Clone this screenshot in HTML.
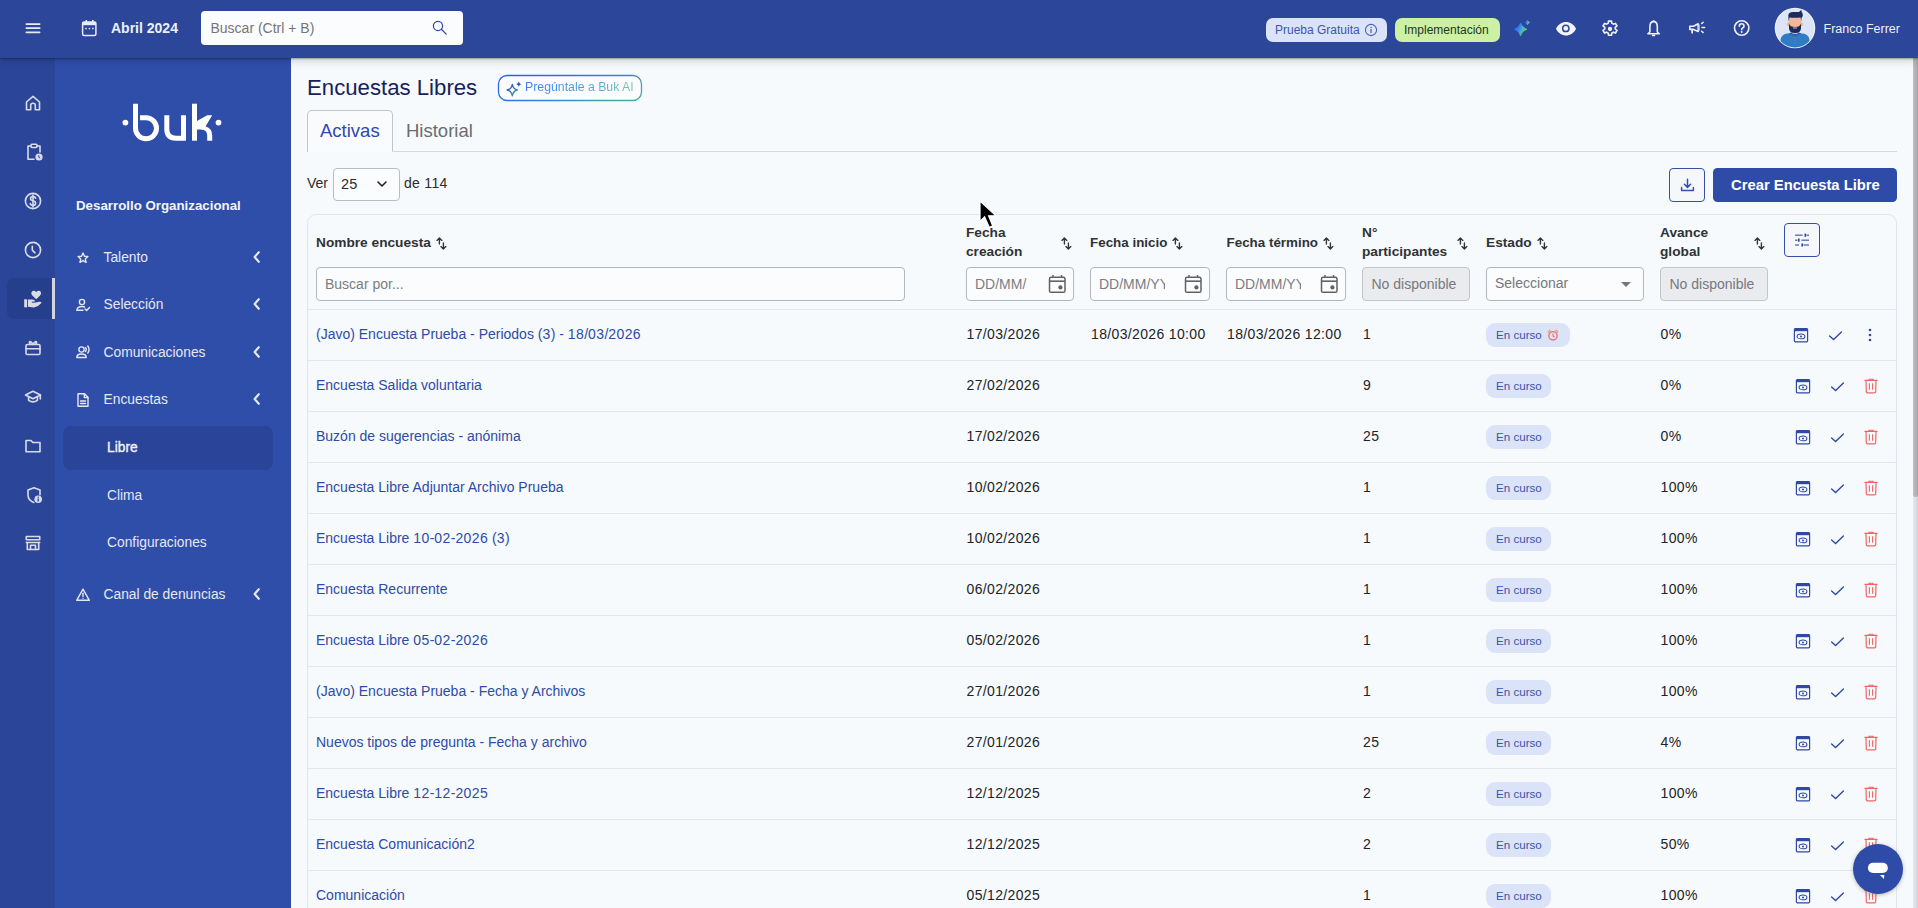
<!DOCTYPE html>
<html><head><meta charset="utf-8">
<style>
*{box-sizing:border-box;margin:0;padding:0}
html,body{width:1918px;height:908px;overflow:hidden;background:#f6fafc;font-family:"Liberation Sans",sans-serif;}
.abs{position:absolute}
#top{position:absolute;left:0;top:0;width:1918px;height:58px;background:#2c4699;z-index:5;box-shadow:0 1px 1.5px rgba(0,0,0,.3),0 3px 8px rgba(0,0,0,.16)}
#rail{position:absolute;left:0;top:58px;width:55px;height:850px;background:#2b4699}
#side{position:absolute;left:55px;top:58px;width:236px;height:850px;background:#2f4eaa}
#main{position:absolute;left:291px;top:58px;width:1627px;height:850px;background:#f6fafc}
#sb{position:absolute;left:1913px;top:58px;width:5px;height:850px;background:linear-gradient(90deg,#e6e8f1,#d2d4dc)}
#sbt{position:absolute;left:1913px;top:58px;width:5px;height:439px;border-radius:0 0 3px 3px;background:linear-gradient(90deg,#bfbfc2,#a8a8aa)}
.t{position:absolute;white-space:nowrap;line-height:1}
.w{color:#fff}
</style></head><body>
<div id="top">
 <svg class="abs" style="left:25px;top:22px" width="16" height="12" viewBox="0 0 16 12"><rect x="0.5" y="1.2" width="15" height="1.8" rx=".9" fill="#e8ebf5"/><rect x="0.5" y="5.3" width="15" height="1.8" rx=".9" fill="#e8ebf5"/><rect x="0.5" y="9.4" width="15" height="1.8" rx=".9" fill="#e8ebf5"/></svg>
 <svg class="abs" style="left:81px;top:19px" width="17" height="18" viewBox="0 0 17 18"><rect x="1.6" y="3" width="13.3" height="13.6" rx="1.5" fill="none" stroke="#e8ebf5" stroke-width="1.5"/><rect x="1.6" y="3" width="13.3" height="3.2" fill="#e8ebf5"/><rect x="4.5" y="1" width="1.6" height="3" fill="#e8ebf5"/><rect x="11" y="1" width="1.6" height="3" fill="#e8ebf5"/><rect x="4.3" y="8.8" width="1.5" height="1.5" fill="#e8ebf5"/><rect x="7.7" y="8.8" width="1.5" height="1.5" fill="#e8ebf5"/><rect x="11.1" y="8.8" width="1.5" height="1.5" fill="#e8ebf5"/></svg>
 <div class="t" style="left:111px;top:21.2px;font-size:14px;font-weight:bold;color:#eef0f7">Abril 2024</div>
 <div class="abs" style="left:201px;top:11px;width:262px;height:34px;background:#fbfcfd;border-radius:4px"></div>
 <div class="t" style="left:210.5px;top:21.3px;font-size:14px;color:#757575">Buscar (Ctrl + B)</div>
 <svg class="abs" style="left:432px;top:20px" width="16" height="16" viewBox="0 0 16 16"><circle cx="6" cy="5.9" r="4.6" fill="none" stroke="#2e45ab" stroke-width="1.25"/><line x1="9.4" y1="9.3" x2="14.2" y2="14.1" stroke="#2e45ab" stroke-width="1.3" stroke-linecap="round"/></svg>
 <div class="abs" style="left:1266px;top:18px;width:121px;height:24px;background:#dbe3f8;border-radius:7px"></div>
 <div class="t" style="left:1275px;top:24px;font-size:12px;color:#3d56a6">Prueba Gratuita</div>
 <svg class="abs" style="left:1364px;top:23px" width="14" height="14" viewBox="0 0 14 14"><circle cx="7" cy="7" r="5.6" fill="none" stroke="#4d63ad" stroke-width="1.1"/><rect x="6.4" y="6" width="1.2" height="4" fill="#4d63ad"/><circle cx="7" cy="4.4" r=".75" fill="#4d63ad"/></svg>
 <div class="abs" style="left:1395px;top:18px;width:105px;height:24px;background:#cdf0a2;border-radius:7px"></div>
 <div class="t" style="left:1404px;top:24px;font-size:12px;color:#22361f">Implementación</div>
 <svg class="abs" style="left:1512px;top:19px" width="20" height="19" viewBox="0 0 20 19"><defs><linearGradient id="sg" x1="0.1" y1="0.3" x2="0.9" y2="0.6"><stop offset="0" stop-color="#2c66f4"/><stop offset=".55" stop-color="#3a9ce6"/><stop offset=".62" stop-color="#4fb5a6"/><stop offset="1" stop-color="#56bf9e"/></linearGradient></defs><path d="M8.5 4.5 Q9.9 9 14.5 10.3 Q9.9 11.6 8.5 16.3 Q7.1 11.6 2.6 10.3 Q7.1 9 8.5 4.5Z" fill="url(#sg)" stroke="url(#sg)" stroke-width="1.3" stroke-linejoin="round"/><path d="M15.4 1.3 Q16.1 2.8 17.6 3.5 Q16.1 4.2 15.4 5.7 Q14.7 4.2 13.2 3.5 Q14.7 2.8 15.4 1.3Z" fill="url(#sg)" stroke="url(#sg)" stroke-width=".9" stroke-linejoin="round"/></svg>
 <svg class="abs" style="left:1555px;top:21px" width="22" height="16" viewBox="0 0 22 16"><path d="M1 7.8 C5 -1.2 17 -1.2 21 7.8 C17 16.8 5 16.8 1 7.8Z" fill="#f4f5fa"/><circle cx="10.8" cy="7.4" r="3.9" fill="#2c4699"/><circle cx="10.8" cy="7.4" r="2.4" fill="#f4f5fa"/></svg>
 <svg class="abs" style="left:1600px;top:18.6px" width="20" height="20" viewBox="0 0 24 24"><path fill="none" stroke="#eef0f7" stroke-width="2" d="M10.3 2.5h3.4l.5 2.6c.7.25 1.3.6 1.9 1.1l2.5-.9 1.7 2.9-2 1.8c.1.7.1 1.3 0 2l2 1.8-1.7 2.9-2.5-.9c-.6.5-1.2.85-1.9 1.1l-.5 2.6h-3.4l-.5-2.6c-.7-.25-1.3-.6-1.9-1.1l-2.5.9-1.7-2.9 2-1.8c-.1-.7-.1-1.3 0-2l-2-1.8 1.7-2.9 2.5.9c.6-.5 1.2-.85 1.9-1.1z"/><circle cx="12" cy="12" r="2.6" fill="#eef0f7"/></svg>
 <svg class="abs" style="left:1645px;top:19px" width="17" height="19" viewBox="0 0 17 19"><path d="M8.6 2.6 C5.8 2.6 4.9 4.8 4.9 7.6 L4.9 13 L2.9 14.8 L14.3 14.8 L12.3 13 L12.3 7.6 C12.3 4.8 11.4 2.6 8.6 2.6Z" fill="none" stroke="#eef0f7" stroke-width="1.6" stroke-linejoin="round"/><rect x="7.5" y="1.2" width="2.2" height="1.8" rx=".9" fill="#eef0f7"/><rect x="6.9" y="15.6" width="3.4" height="1.7" rx=".85" fill="#eef0f7"/></svg>
 <svg class="abs" style="left:1688px;top:21px" width="19" height="14" viewBox="0 0 19 14"><path d="M1.8 5.2 L5.5 5.2 L10.2 2.8 L10.2 10.4 L5.5 8.4 L1.8 8.4Z" fill="none" stroke="#eef0f7" stroke-width="1.6" stroke-linejoin="round"/><rect x="3.3" y="8" width="1.7" height="4.5" fill="#eef0f7"/><rect x="10.2" y="3.4" width="1.5" height="6.4" fill="#c8d0ea"/><line x1="13.6" y1="2.6" x2="15.2" y2="1.2" stroke="#eef0f7" stroke-width="1.4" stroke-linecap="round"/><line x1="14" y1="6.5" x2="16.6" y2="6.5" stroke="#eef0f7" stroke-width="1.5" stroke-linecap="round"/><line x1="13.6" y1="10.2" x2="15.2" y2="11.6" stroke="#eef0f7" stroke-width="1.4" stroke-linecap="round"/></svg>
 <svg class="abs" style="left:1732px;top:19px" width="19" height="19" viewBox="0 0 19 19"><circle cx="9.7" cy="9" r="7.2" fill="none" stroke="#eef0f7" stroke-width="1.6"/><path d="M7.3 7.2 Q7.3 4.8 9.7 4.8 Q12 4.8 12 6.9 Q12 8.3 10.6 9 Q9.7 9.5 9.7 10.8" fill="none" stroke="#eef0f7" stroke-width="1.6" stroke-linecap="round"/><circle cx="9.7" cy="13" r="1" fill="#eef0f7"/></svg>
 <svg class="abs" style="left:1774px;top:7px" width="42" height="42" viewBox="0 0 42 42"><defs><clipPath id="avc"><circle cx="21" cy="21" r="19.5"/></clipPath></defs><circle cx="21" cy="21" r="20.3" fill="#eef1f8"/><circle cx="21" cy="21" r="19.2" fill="#dce4f7"/><g clip-path="url(#avc)"><path d="M6.5 42 L6.5 33 Q7 27.5 13 26.5 L29 26.5 Q35 27.5 35.5 33 L35.5 42Z" fill="#2e7cc4"/><path d="M14.5 26.5 L21 29.5 L27.5 26.5 L25 25.5 L17 25.5Z" fill="#2766a8"/><circle cx="21" cy="31" r=".5" fill="#6a8fd0"/><circle cx="21" cy="33.5" r=".5" fill="#6a8fd0"/><circle cx="21" cy="36" r=".5" fill="#6a8fd0"/><rect x="18.5" y="23" width="5" height="4" fill="#eaa98a"/><rect x="13.3" y="15.5" width="2.4" height="3.6" rx="1.2" fill="#f0a96b"/><rect x="26.3" y="15.5" width="2.4" height="3.6" rx="1.2" fill="#f0a96b"/><rect x="15" y="10" width="12" height="10" rx="2" fill="#f3b89a"/><path d="M15 16.5 L15 21.5 Q15.5 26 21 26 Q26.5 26 27 21.5 L27 16.5 Q26 20 21 20 Q16 20 15 16.5Z" fill="#1c2a5c"/><rect x="19" y="20.5" width="4" height="1" fill="#f3b89a"/><path d="M14.6 14.5 L14.3 8 Q15 5 19 5 L25 5 Q26.5 3.5 27.5 2.5 Q27 5 28.5 6 Q29.5 8.5 27.5 11 L27.4 14.5 L26.5 10.5 Q21 11 15.5 10.5Z" fill="#1c2a5c"/></g></svg>
 <div class="t" style="left:1823.5px;top:22.8px;font-size:12.5px;color:#eef0f7">Franco Ferrer</div>
</div>
<div id="rail">
<div class="abs" style="left:7px;top:220px;width:45px;height:41px;background:#263f8d;border-radius:7px 0 0 7px"></div>
<div class="abs" style="left:52px;top:220px;width:3px;height:41px;background:#d4d5da"></div>
<svg class="abs" style="left:24.0px;top:36.0px" width="18" height="18" viewBox="0 0 18 18"><path d="M2.5 8 L9 2.3 L15.5 8 L15.5 15.7 L11.3 15.7 L11.3 11 Q11.3 9.2 9 9.2 Q6.7 9.2 6.7 11 L6.7 15.7 L2.5 15.7Z" fill="none" stroke="#d9dce8" stroke-width="1.6" stroke-linejoin="round" stroke-linecap="round"/></svg>
<svg class="abs" style="left:24.5px;top:85.0px" width="18" height="18" viewBox="0 0 18 18"><path d="M6 3 L3 3 L3 16.3 L9 16.3" fill="none" stroke="#d9dce8" stroke-width="1.6" stroke-linejoin="round" stroke-linecap="round"/><path d="M12 3 L15 3 L15 9" fill="none" stroke="#d9dce8" stroke-width="1.6" stroke-linejoin="round" stroke-linecap="round"/><rect x="6" y="1.3" width="6" height="3.2" rx="1" fill="none" stroke="#d9dce8" stroke-width="1.6" stroke-linejoin="round" stroke-linecap="round"/><circle cx="14" cy="14" r="3.6" fill="#d9dce8"/><path d="M13.8 12.3 L13.8 14.2 L15.2 15.2" stroke="#2b4699" stroke-width="1" fill="none"/></svg>
<svg class="abs" style="left:24.0px;top:134.0px" width="18" height="18" viewBox="0 0 18 18"><circle cx="9" cy="9" r="7.6" fill="none" stroke="#d9dce8" stroke-width="1.6" stroke-linejoin="round" stroke-linecap="round"/><path d="M11.6 6.3 Q11.2 4.6 9 4.6 Q6.5 4.6 6.5 6.6 Q6.5 8.3 9 8.8 Q11.6 9.3 11.6 11.2 Q11.6 13.3 9 13.3 Q6.6 13.3 6.3 11.6" fill="none" stroke="#d9dce8" stroke-width="1.6" stroke-linejoin="round" stroke-linecap="round"/><line x1="9" y1="3" x2="9" y2="15" fill="none" stroke="#d9dce8" stroke-width="1.6" stroke-linejoin="round" stroke-linecap="round"/></svg>
<svg class="abs" style="left:24.0px;top:183.0px" width="18" height="18" viewBox="0 0 18 18"><circle cx="9" cy="9" r="7.6" fill="none" stroke="#d9dce8" stroke-width="1.6" stroke-linejoin="round" stroke-linecap="round"/><path d="M8.3 5.2 L8.3 9.2 L11 11.8" fill="none" stroke="#d9dce8" stroke-width="1.6" stroke-linejoin="round" stroke-linecap="round"/></svg>
<svg class="abs" style="left:24px;top:232px" width="19" height="19" viewBox="0 0 19 19"><path d="M12.2 9.2 L8.3 5.4 Q6.6 3.6 7.6 1.9 Q8.6 0.5 10.3 0.8 Q11.4 1 12.2 2 Q13 1 14.1 0.8 Q15.8 0.5 16.8 1.9 Q17.8 3.6 16.1 5.4Z" fill="#d9dce8"/><rect x="0.2" y="9.3" width="2.9" height="8" fill="#d9dce8"/><path d="M4 9.6 L8.6 9.6 Q10.9 9.9 11 11.4 L7.6 11.8 L8 12.8 L11.6 12.6 L15 11.8 Q17.8 11.6 17.4 13 Q13.8 17 10 17.6 L4 16.8Z" fill="#d9dce8"/></svg>
<svg class="abs" style="left:24.0px;top:281.0px" width="18" height="18" viewBox="0 0 18 18"><rect x="2" y="5.5" width="14" height="10" rx="1.3" fill="none" stroke="#d9dce8" stroke-width="1.6" stroke-linejoin="round" stroke-linecap="round"/><line x1="2" y1="9.8" x2="16" y2="9.8" fill="none" stroke="#d9dce8" stroke-width="1.6" stroke-linejoin="round" stroke-linecap="round"/><path d="M9 5.5 Q7 2 5.6 2.8 Q4.8 3.6 6.5 5.3 M9 5.5 Q11 2 12.4 2.8 Q13.2 3.6 11.5 5.3" fill="none" stroke="#d9dce8" stroke-width="1.6" stroke-linejoin="round" stroke-linecap="round"/></svg>
<svg class="abs" style="left:24.0px;top:330.0px" width="18" height="18" viewBox="0 0 18 18"><path d="M1.5 7 L9 3.2 L16.5 7 L9 10.8Z" fill="none" stroke="#d9dce8" stroke-width="1.6" stroke-linejoin="round" stroke-linecap="round"/><path d="M4.6 8.8 L4.6 12.3 Q9 15.5 13.4 12.3 L13.4 8.8" fill="none" stroke="#d9dce8" stroke-width="1.6" stroke-linejoin="round" stroke-linecap="round"/><line x1="16.3" y1="7" x2="16.3" y2="11" fill="none" stroke="#d9dce8" stroke-width="1.6" stroke-linejoin="round" stroke-linecap="round"/></svg>
<svg class="abs" style="left:24.0px;top:379.0px" width="18" height="18" viewBox="0 0 18 18"><path d="M2 3.5 L7 3.5 L8.8 5.5 L16 5.5 L16 14.8 L2 14.8Z" fill="none" stroke="#d9dce8" stroke-width="1.6" stroke-linejoin="round" stroke-linecap="round"/></svg>
<svg class="abs" style="left:24.5px;top:428.0px" width="18" height="18" viewBox="0 0 18 18"><path d="M9 1.8 L15 4 L15 8.8 M8.8 16.4 Q3 14.5 3 8.8 L3 4 L9 1.8" fill="none" stroke="#d9dce8" stroke-width="1.6" stroke-linejoin="round" stroke-linecap="round"/><circle cx="13.2" cy="13.3" r="3.8" fill="#d9dce8"/><rect x="12.5" y="12.5" width="1.4" height="3" fill="#2b4699"/><circle cx="13.2" cy="11.3" r=".7" fill="#2b4699"/></svg>
<svg class="abs" style="left:24.0px;top:476.0px" width="18" height="18" viewBox="0 0 18 18"><path d="M2.3 2.5 L15.7 2.5 L15.7 5.8 L2.3 5.8Z" fill="none" stroke="#d9dce8" stroke-width="1.6" stroke-linejoin="round" stroke-linecap="round"/><line x1="2.3" y1="8.5" x2="15.7" y2="8.5" fill="none" stroke="#d9dce8" stroke-width="1.6" stroke-linejoin="round" stroke-linecap="round"/><path d="M3.3 8.5 L3.3 15.5 L14.7 15.5 L14.7 8.5" fill="none" stroke="#d9dce8" stroke-width="1.6" stroke-linejoin="round" stroke-linecap="round"/><path d="M6.5 15.5 L6.5 11.3 L11.5 11.3 L11.5 15.5" fill="none" stroke="#d9dce8" stroke-width="1.6" stroke-linejoin="round" stroke-linecap="round"/></svg>
</div>
<div id="side">
<svg class="abs" style="left:-55px;top:-58px" width="291" height="160" viewBox="0 0 291 160">
<circle cx="125.4" cy="122.6" r="2.9" fill="#fff"/><circle cx="218.5" cy="122.6" r="2.9" fill="#fff"/>
<path d="M135.5 103.7 L135.5 128.3 A10.5 10.5 0 1 0 146 117.8 L140 117.8" fill="none" stroke="#fff" stroke-width="5"/>
<path d="M166.8 115.2 L166.8 129 Q166.8 138.2 176 138.2 L183.5 138.2 M183.5 115.2 L183.5 140.7" fill="none" stroke="#fff" stroke-width="5"/>
<path d="M194.5 103.7 L194.5 140.7" fill="none" stroke="#fff" stroke-width="5"/>
<path d="M196.5 121.3 L207.3 115.2 L212.2 115.2 L205.6 126.3 Q212.2 128.6 212.2 135.5 L212.2 140.7 L207.2 140.7 L207.2 135.8 Q207.2 129.4 200.8 129.4 L196.5 129.4 Z" fill="#fff"/>
</svg>
<div class="t" style="left:21px;top:140.9px;font-size:13.3px;font-weight:bold;color:#f3f4f9">Desarrollo Organizacional</div>
<div class="t" style="left:48.5px;top:192.7px;font-size:13.8px;color:#e6e8f0">Talento</div>
<svg class="abs" style="left:193.5px;top:191.0px" width="16" height="16" viewBox="0 0 16 16"><path d="M9.8 3.2 L5.6 8 L9.8 12.8" fill="none" stroke="#e6e8f0" stroke-width="2.1" stroke-linecap="round" stroke-linejoin="round"/></svg>
<div class="t" style="left:48.5px;top:239.7px;font-size:13.8px;color:#e6e8f0">Selección</div>
<svg class="abs" style="left:193.5px;top:238.0px" width="16" height="16" viewBox="0 0 16 16"><path d="M9.8 3.2 L5.6 8 L9.8 12.8" fill="none" stroke="#e6e8f0" stroke-width="2.1" stroke-linecap="round" stroke-linejoin="round"/></svg>
<div class="t" style="left:48.5px;top:287.7px;font-size:13.8px;color:#e6e8f0">Comunicaciones</div>
<svg class="abs" style="left:193.5px;top:286.0px" width="16" height="16" viewBox="0 0 16 16"><path d="M9.8 3.2 L5.6 8 L9.8 12.8" fill="none" stroke="#e6e8f0" stroke-width="2.1" stroke-linecap="round" stroke-linejoin="round"/></svg>
<div class="t" style="left:48.5px;top:334.7px;font-size:13.8px;color:#e6e8f0">Encuestas</div>
<svg class="abs" style="left:193.5px;top:333.0px" width="16" height="16" viewBox="0 0 16 16"><path d="M9.8 3.2 L5.6 8 L9.8 12.8" fill="none" stroke="#e6e8f0" stroke-width="2.1" stroke-linecap="round" stroke-linejoin="round"/></svg>
<svg class="abs" style="left:20.0px;top:191.5px" width="16" height="16" viewBox="0 0 16 16"><path d="M8 3 L9.45 6.2 L12.9 6.55 L10.3 8.9 L11.05 12.3 L8 10.55 L4.95 12.3 L5.7 8.9 L3.1 6.55 L6.55 6.2Z" fill="none" stroke="#e6e8f0" stroke-width="1.4" stroke-linejoin="round" stroke-linecap="round"/></svg>
<svg class="abs" style="left:20.0px;top:238.5px" width="16" height="16" viewBox="0 0 16 16"><circle cx="7" cy="5" r="2.6" fill="none" stroke="#e6e8f0" stroke-width="1.4" stroke-linejoin="round" stroke-linecap="round"/><path d="M2 13.3 Q2 9.5 7 9.5 Q8.5 9.5 9.5 10" fill="none" stroke="#e6e8f0" stroke-width="1.4" stroke-linejoin="round" stroke-linecap="round"/><line x1="2" y1="13.3" x2="8" y2="13.3" fill="none" stroke="#e6e8f0" stroke-width="1.4" stroke-linejoin="round" stroke-linecap="round"/><path d="M10 12 L11.6 13.5 L14.5 10.5" fill="none" stroke="#e6e8f0" stroke-width="1.4" stroke-linejoin="round" stroke-linecap="round"/></svg>
<svg class="abs" style="left:20.0px;top:286.0px" width="16" height="16" viewBox="0 0 16 16"><circle cx="6.5" cy="5.5" r="2.6" fill="none" stroke="#e6e8f0" stroke-width="1.4" stroke-linejoin="round" stroke-linecap="round"/><path d="M1.8 13.5 Q1.8 10 6.5 10 Q11.2 10 11.2 13.5Z" fill="none" stroke="#e6e8f0" stroke-width="1.4" stroke-linejoin="round" stroke-linecap="round"/><path d="M10.5 3.5 Q12 5.5 10.5 7.5 M12.8 2 Q15.3 5.5 12.8 9" fill="none" stroke="#e6e8f0" stroke-width="1.4" stroke-linejoin="round" stroke-linecap="round"/></svg>
<svg class="abs" style="left:20.0px;top:333.5px" width="16" height="16" viewBox="0 0 16 16"><path d="M3 1.8 L9.5 1.8 L13 5.3 L13 14.2 L3 14.2Z" fill="none" stroke="#e6e8f0" stroke-width="1.4" stroke-linejoin="round" stroke-linecap="round"/><path d="M9.3 2 L9.3 5.5 L12.8 5.5" fill="none" stroke="#e6e8f0" stroke-width="1.4" stroke-linejoin="round" stroke-linecap="round"/><line x1="5.5" y1="9" x2="10.5" y2="9" fill="none" stroke="#e6e8f0" stroke-width="1.4" stroke-linejoin="round" stroke-linecap="round"/><line x1="5.5" y1="11.5" x2="10.5" y2="11.5" fill="none" stroke="#e6e8f0" stroke-width="1.4" stroke-linejoin="round" stroke-linecap="round"/></svg>
<div class="abs" style="left:8px;top:368px;width:210px;height:44px;background:#2a4499;border-radius:8px"></div>
<div class="t" style="left:52px;top:382.5px;font-size:13.8px;color:#f3f4f9;-webkit-text-stroke:.35px #f3f4f9">Libre</div>
<div class="t" style="left:52px;top:430.6px;font-size:13.8px;color:#e6e8f0">Clima</div>
<div class="t" style="left:52px;top:477.5px;font-size:13.8px;color:#e6e8f0">Configuraciones</div>
<div class="t" style="left:48.5px;top:529.6px;font-size:13.8px;color:#e6e8f0">Canal de denuncias</div>
<svg class="abs" style="left:193.5px;top:528.0px" width="16" height="16" viewBox="0 0 16 16"><path d="M9.8 3.2 L5.6 8 L9.8 12.8" fill="none" stroke="#e6e8f0" stroke-width="2.1" stroke-linecap="round" stroke-linejoin="round"/></svg>
<svg class="abs" style="left:20.0px;top:528.5px" width="16" height="16" viewBox="0 0 16 16"><path d="M8 2.2 L14.3 13.3 L1.7 13.3Z" fill="none" stroke="#e6e8f0" stroke-width="1.4" stroke-linejoin="round" stroke-linecap="round"/><line x1="8" y1="6.3" x2="8" y2="9.5" fill="none" stroke="#e6e8f0" stroke-width="1.4" stroke-linejoin="round" stroke-linecap="round"/><circle cx="8" cy="11.4" r=".6" fill="#e6e8f0"/></svg>
</div>
<div id="main"></div>


<!--MAIN-->
<div class="t" style="left:307px;top:76.5px;font-size:22.2px;color:#17215a">Encuestas Libres</div>
<svg class="abs" style="left:497px;top:74px" width="146" height="28" viewBox="0 0 146 28"><defs><linearGradient id="aig" gradientUnits="userSpaceOnUse" x1="93" y1="-24" x2="119" y2="52"><stop offset="0" stop-color="#2a64e6"/><stop offset=".45" stop-color="#3384e4"/><stop offset=".55" stop-color="#3a9ab8"/><stop offset="1" stop-color="#5cc08c"/></linearGradient><linearGradient id="aig2" x1="0" y1="0" x2="1" y2="1"><stop offset="0" stop-color="#3248b8"/><stop offset="1" stop-color="#3ba79a"/></linearGradient></defs><rect x="1.5" y="1.5" width="143" height="25" rx="8.5" fill="#fbfcfe" stroke="url(#aig)" stroke-width="1.3"/><path d="M15.3 10.3 Q16.2 15.2 20.5 16 Q16.2 16.8 15.3 21.8 Q14.4 16.8 10.1 16 Q14.4 15.2 15.3 10.3Z" fill="none" stroke="url(#aig2)" stroke-width="1.3" stroke-linejoin="round"/><path d="M21.8 7.6 Q22.2 9.8 24.4 10.2 Q22.2 10.6 21.8 12.8 Q21.4 10.6 19.2 10.2 Q21.4 9.8 21.8 7.6Z" fill="#3450b8"/></svg>
<div class="t" style="left:525px;top:80.8px;font-size:12.3px;"><span style="background:linear-gradient(90deg,#3a80ea 0%,#44a0e0 50%,#78c4b0 100%);-webkit-background-clip:text;background-clip:text;color:transparent">Pregúntale a Buk AI</span></div>
<div class="abs" style="left:307px;top:110px;width:86px;height:42px;border:1px solid #c3c5cc;border-bottom:none;border-radius:5px 5px 0 0;background:#fafbfd"></div>
<div class="abs" style="left:392px;top:151px;width:1505px;height:1px;background:#d5d8dd"></div>
<div class="t" style="left:320px;top:122.3px;font-size:18.5px;color:#2e49ad">Activas</div>
<div class="t" style="left:406px;top:122.3px;font-size:18.5px;color:#6b6b70">Historial</div>
<div class="t" style="left:307px;top:176.4px;font-size:14px;color:#2b2b2b">Ver</div>
<div class="abs" style="left:333px;top:168px;width:67px;height:33px;border:1px solid #b9bcc2;border-radius:4px;background:#fbfcfd"></div>
<div class="t" style="left:341px;top:177.2px;font-size:14.5px;color:#2b2b2b;letter-spacing:.3px">25</div>
<svg class="abs" style="left:376px;top:179px" width="12" height="10" viewBox="0 0 12 10"><path d="M2 3 L6 7 L10 3" fill="none" stroke="#222" stroke-width="1.6" stroke-linecap="round" stroke-linejoin="round"/></svg>
<div class="t" style="left:404px;top:176.4px;font-size:14px;color:#2b2b2b;letter-spacing:.3px">de 114</div>
<div class="abs" style="left:1669px;top:168px;width:36px;height:34px;border:1.2px solid #3450aa;border-radius:4px;background:#f5f7fa"></div>
<svg class="abs" style="left:1678px;top:176px" width="19" height="18" viewBox="0 0 19 18"><path d="M9.5 3.3 L9.5 11.2 M6.4 8.3 L9.5 11.4 L12.6 8.3" fill="none" stroke="#3450aa" stroke-width="1.5" stroke-linecap="round" stroke-linejoin="round"/><path d="M3.6 11.4 L3.6 14.4 L15.4 14.4 L15.4 11.4" fill="none" stroke="#3450aa" stroke-width="1.5" stroke-linecap="round" stroke-linejoin="round"/></svg>
<div class="abs" style="left:1713px;top:168px;width:184px;height:34px;background:#2f4ba8;border-radius:4.5px"></div>
<div class="t" style="left:1731px;top:178.2px;font-size:14.8px;color:#fff;font-weight:bold">Crear Encuesta Libre</div>
<div class="abs" style="left:307px;top:214px;width:1590px;height:786px;border:1px solid #e2e5e9;border-radius:9px;background:#f6fafc"></div>
<div class="t" style="left:316px;top:235.6px;font-size:13.7px;font-weight:bold;color:#303235">Nombre encuesta</div>
<svg class="abs" style="left:436px;top:236.5px" width="11" height="13" viewBox="0 0 11 13"><g fill="none" stroke="#303235" stroke-width="1.35" stroke-linecap="round" stroke-linejoin="round"><path d="M3.4 7 L3.4 1.2 M1 3.4 L3.4 1 L5.8 3.4"/><path d="M7.4 5.8 L7.4 11.8 M5 9.6 L7.4 12 L9.8 9.6"/></g></svg>
<div class="t" style="left:966px;top:225.6px;font-size:13.7px;font-weight:bold;color:#303235">Fecha</div>
<div class="t" style="left:966px;top:245.4px;font-size:13.7px;font-weight:bold;color:#303235">creación</div>
<svg class="abs" style="left:1061px;top:236.5px" width="11" height="13" viewBox="0 0 11 13"><g fill="none" stroke="#303235" stroke-width="1.35" stroke-linecap="round" stroke-linejoin="round"><path d="M3.4 7 L3.4 1.2 M1 3.4 L3.4 1 L5.8 3.4"/><path d="M7.4 5.8 L7.4 11.8 M5 9.6 L7.4 12 L9.8 9.6"/></g></svg>
<div class="t" style="left:1090px;top:235.9px;font-size:13.4px;font-weight:bold;color:#303235">Fecha inicio</div>
<svg class="abs" style="left:1172px;top:236.5px" width="11" height="13" viewBox="0 0 11 13"><g fill="none" stroke="#303235" stroke-width="1.35" stroke-linecap="round" stroke-linejoin="round"><path d="M3.4 7 L3.4 1.2 M1 3.4 L3.4 1 L5.8 3.4"/><path d="M7.4 5.8 L7.4 11.8 M5 9.6 L7.4 12 L9.8 9.6"/></g></svg>
<div class="t" style="left:1226.5px;top:235.9px;font-size:13.4px;font-weight:bold;color:#303235">Fecha término</div>
<svg class="abs" style="left:1323px;top:236.5px" width="11" height="13" viewBox="0 0 11 13"><g fill="none" stroke="#303235" stroke-width="1.35" stroke-linecap="round" stroke-linejoin="round"><path d="M3.4 7 L3.4 1.2 M1 3.4 L3.4 1 L5.8 3.4"/><path d="M7.4 5.8 L7.4 11.8 M5 9.6 L7.4 12 L9.8 9.6"/></g></svg>
<div class="t" style="left:1362px;top:225.6px;font-size:13.7px;font-weight:bold;color:#303235">N°</div>
<div class="t" style="left:1362px;top:245.4px;font-size:13.7px;font-weight:bold;color:#303235">participantes</div>
<svg class="abs" style="left:1457px;top:236.5px" width="11" height="13" viewBox="0 0 11 13"><g fill="none" stroke="#303235" stroke-width="1.35" stroke-linecap="round" stroke-linejoin="round"><path d="M3.4 7 L3.4 1.2 M1 3.4 L3.4 1 L5.8 3.4"/><path d="M7.4 5.8 L7.4 11.8 M5 9.6 L7.4 12 L9.8 9.6"/></g></svg>
<div class="t" style="left:1486px;top:235.6px;font-size:13.7px;font-weight:bold;color:#303235">Estado</div>
<svg class="abs" style="left:1537px;top:236.5px" width="11" height="13" viewBox="0 0 11 13"><g fill="none" stroke="#303235" stroke-width="1.35" stroke-linecap="round" stroke-linejoin="round"><path d="M3.4 7 L3.4 1.2 M1 3.4 L3.4 1 L5.8 3.4"/><path d="M7.4 5.8 L7.4 11.8 M5 9.6 L7.4 12 L9.8 9.6"/></g></svg>
<div class="t" style="left:1660px;top:225.6px;font-size:13.7px;font-weight:bold;color:#303235">Avance</div>
<div class="t" style="left:1660px;top:245.4px;font-size:13.7px;font-weight:bold;color:#303235">global</div>
<svg class="abs" style="left:1754px;top:236.5px" width="11" height="13" viewBox="0 0 11 13"><g fill="none" stroke="#303235" stroke-width="1.35" stroke-linecap="round" stroke-linejoin="round"><path d="M3.4 7 L3.4 1.2 M1 3.4 L3.4 1 L5.8 3.4"/><path d="M7.4 5.8 L7.4 11.8 M5 9.6 L7.4 12 L9.8 9.6"/></g></svg>
<div class="abs" style="left:1784px;top:223px;width:36px;height:34px;border:1.2px solid #3450aa;border-radius:4px;background:#f5f7fa"></div>
<svg class="abs" style="left:1793px;top:231px" width="18" height="18" viewBox="0 0 18 18"><g stroke="#5566b0" stroke-width="1.3"><line x1="2" y1="4.2" x2="9.6" y2="4.2"/><line x1="13.4" y1="4.2" x2="16" y2="4.2"/><line x1="2" y1="9.2" x2="4.6" y2="9.2"/><line x1="8.4" y1="9.2" x2="16" y2="9.2"/><line x1="2" y1="14" x2="6" y2="14"/><line x1="10.4" y1="14" x2="16" y2="14"/></g><g stroke="#2f45a8" stroke-width="1.6"><line x1="12.3" y1="2.6" x2="12.3" y2="5.8"/><line x1="5.8" y1="7.6" x2="5.8" y2="10.8"/><line x1="9.2" y1="12.4" x2="9.2" y2="15.6"/></g></svg>
<div class="abs" style="left:316px;top:267px;width:589px;height:34px;border:1px solid #b3b6bc;border-radius:4px;background:#fbfcfd"></div>
<div class="t" style="left:325px;top:276.9px;font-size:14px;color:#7b7d82">Buscar por...</div>
<div class="abs" style="left:966px;top:267px;width:108px;height:34px;border:1px solid #b3b6bc;border-radius:4px;background:#fbfcfd"></div>
<div class="t" style="left:975px;top:276.9px;font-size:14px;color:#7b7d82;width:60px;overflow:hidden">DD/MM/</div>
<svg class="abs" style="left:1047px;top:272.7px" width="20" height="21" viewBox="0 0 20 21"><rect x="2.5" y="4.3" width="15.5" height="15" rx="1.6" fill="none" stroke="#606267" stroke-width="1.5"/><line x1="2.5" y1="8.2" x2="18" y2="8.2" stroke="#606267" stroke-width="1.6"/><line x1="6" y1="2" x2="6" y2="5" stroke="#606267" stroke-width="1.5"/><line x1="14.5" y1="2" x2="14.5" y2="5" stroke="#606267" stroke-width="1.5"/><circle cx="13.4" cy="14.4" r="2.1" fill="#606267"/></svg>
<div class="abs" style="left:1090px;top:267px;width:120px;height:34px;border:1px solid #b3b6bc;border-radius:4px;background:#fbfcfd"></div>
<div class="t" style="left:1099px;top:276.9px;font-size:14px;color:#7b7d82;width:66px;overflow:hidden">DD/MM/YY</div>
<svg class="abs" style="left:1183px;top:272.7px" width="20" height="21" viewBox="0 0 20 21"><rect x="2.5" y="4.3" width="15.5" height="15" rx="1.6" fill="none" stroke="#606267" stroke-width="1.5"/><line x1="2.5" y1="8.2" x2="18" y2="8.2" stroke="#606267" stroke-width="1.6"/><line x1="6" y1="2" x2="6" y2="5" stroke="#606267" stroke-width="1.5"/><line x1="14.5" y1="2" x2="14.5" y2="5" stroke="#606267" stroke-width="1.5"/><circle cx="13.4" cy="14.4" r="2.1" fill="#606267"/></svg>
<div class="abs" style="left:1226px;top:267px;width:120px;height:34px;border:1px solid #b3b6bc;border-radius:4px;background:#fbfcfd"></div>
<div class="t" style="left:1235px;top:276.9px;font-size:14px;color:#7b7d82;width:66px;overflow:hidden">DD/MM/YY</div>
<svg class="abs" style="left:1319px;top:272.7px" width="20" height="21" viewBox="0 0 20 21"><rect x="2.5" y="4.3" width="15.5" height="15" rx="1.6" fill="none" stroke="#606267" stroke-width="1.5"/><line x1="2.5" y1="8.2" x2="18" y2="8.2" stroke="#606267" stroke-width="1.6"/><line x1="6" y1="2" x2="6" y2="5" stroke="#606267" stroke-width="1.5"/><line x1="14.5" y1="2" x2="14.5" y2="5" stroke="#606267" stroke-width="1.5"/><circle cx="13.4" cy="14.4" r="2.1" fill="#606267"/></svg>
<div class="abs" style="left:1362px;top:267px;width:108px;height:34px;border:1px solid #c3c5ca;border-radius:4px;background:#e9ebee"></div>
<div class="t" style="left:1371.5px;top:277.1px;font-size:14px;color:#77797e">No disponible</div>
<div class="abs" style="left:1486px;top:267px;width:158px;height:34px;border:1px solid #b3b6bc;border-radius:4px;background:#fbfcfd"></div>
<div class="t" style="left:1495px;top:275.7px;font-size:14px;color:#75777c">Seleccionar</div>
<svg class="abs" style="left:1620px;top:281px" width="12" height="7" viewBox="0 0 12 7"><path d="M1 1 L11 1 L6 6Z" fill="#75777c"/></svg>
<div class="abs" style="left:1660px;top:267px;width:108px;height:34px;border:1px solid #c3c5ca;border-radius:4px;background:#e9ebee"></div>
<div class="t" style="left:1669.5px;top:277.1px;font-size:14px;color:#77797e">No disponible</div>
<div class="abs" style="left:308px;top:309px;width:1588px;height:1px;background:#e3e6ea"></div>
<div class="t" style="left:316px;top:327.4px;font-size:14px;color:#2f4aa8">(Javo) Encuesta Prueba - Periodos (<span style="letter-spacing:.4px">3</span>) - <span style="letter-spacing:.4px">18</span>/<span style="letter-spacing:.4px">03</span>/<span style="letter-spacing:.4px">2026</span></div>
<div class="t" style="left:966.5px;top:327.4px;font-size:14px;color:#222326;letter-spacing:.35px;">17/03/2026</div>
<div class="t" style="left:1091px;top:327.4px;font-size:14px;color:#222326;letter-spacing:.35px;">18/03/2026 10:00</div>
<div class="t" style="left:1227px;top:327.4px;font-size:14px;color:#222326;letter-spacing:.35px;">18/03/2026 12:00</div>
<div class="t" style="left:1363px;top:327.4px;font-size:14px;color:#222326;letter-spacing:.35px;">1</div>
<div class="abs" style="left:1486px;top:323px;width:84px;height:24px;background:#dbe3f8;border-radius:9px"></div>
<div class="t" style="left:1496px;top:328.9px;font-size:11.6px;color:#3a55a8">En curso</div>
<svg class="abs" style="left:1547px;top:328.5px" width="12" height="12" viewBox="0 0 12 12"><circle cx="6" cy="6.8" r="4.2" fill="none" stroke="#ef6f6f" stroke-width="1.3"/><path d="M6 4.6 L6 7 L7.5 8" fill="none" stroke="#ef6f6f" stroke-width="1.1"/><path d="M1.2 3 L3 1.2 M10.8 3 L9 1.2" stroke="#f29a5c" stroke-width="1.3" stroke-linecap="round"/></svg>
<div class="t" style="left:1660.5px;top:327.4px;font-size:14px;color:#222326;letter-spacing:.35px;">0%</div>
<svg class="abs" style="left:1793px;top:327px" width="16" height="16" viewBox="0 0 16 16"><rect x="1.4" y="1.6" width="13.2" height="13.2" rx="1" fill="none" stroke="#3048a8" stroke-width="1.2"/><rect x="1.4" y="1.6" width="13.2" height="2.6" fill="#3048a8"/><ellipse cx="8" cy="9.4" rx="3.9" ry="2.4" fill="none" stroke="#3048a8" stroke-width="1.1"/><circle cx="8" cy="9.4" r="1" fill="#3048a8"/></svg>
<svg class="abs" style="left:1827.5px;top:328px" width="16" height="14" viewBox="0 0 16 14"><path d="M1.6 7.9 L5.6 11.5 L13.4 4" fill="none" stroke="#3048a8" stroke-width="1.35" stroke-linecap="round" stroke-linejoin="miter"/></svg>
<svg class="abs" style="left:1866px;top:328px" width="8" height="14" viewBox="0 0 8 14"><circle cx="4" cy="2" r="1.3" fill="#34489e"/><circle cx="4" cy="7" r="1.3" fill="#34489e"/><circle cx="4" cy="12" r="1.3" fill="#34489e"/></svg>
<div class="abs" style="left:308px;top:360px;width:1588px;height:1px;background:#e3e6ea"></div>
<div class="t" style="left:316px;top:378.4px;font-size:14px;color:#2f4aa8">Encuesta Salida voluntaria</div>
<div class="t" style="left:966.5px;top:378.4px;font-size:14px;color:#222326;letter-spacing:.35px;">27/02/2026</div>
<div class="t" style="left:1363px;top:378.4px;font-size:14px;color:#222326;letter-spacing:.35px;">9</div>
<div class="abs" style="left:1486px;top:374px;width:65px;height:24px;background:#dbe3f8;border-radius:9px"></div>
<div class="t" style="left:1496px;top:379.9px;font-size:11.6px;color:#3a55a8">En curso</div>
<div class="t" style="left:1660.5px;top:378.4px;font-size:14px;color:#222326;letter-spacing:.35px;">0%</div>
<svg class="abs" style="left:1795px;top:378px" width="16" height="16" viewBox="0 0 16 16"><rect x="1.4" y="1.6" width="13.2" height="13.2" rx="1" fill="none" stroke="#3048a8" stroke-width="1.2"/><rect x="1.4" y="1.6" width="13.2" height="2.6" fill="#3048a8"/><ellipse cx="8" cy="9.4" rx="3.9" ry="2.4" fill="none" stroke="#3048a8" stroke-width="1.1"/><circle cx="8" cy="9.4" r="1" fill="#3048a8"/></svg>
<svg class="abs" style="left:1829.5px;top:379px" width="16" height="14" viewBox="0 0 16 14"><path d="M1.6 7.9 L5.6 11.5 L13.4 4" fill="none" stroke="#3048a8" stroke-width="1.35" stroke-linecap="round" stroke-linejoin="miter"/></svg>
<svg class="abs" style="left:1863px;top:377px" width="16" height="17" viewBox="0 0 16 17"><path d="M3 3.6 L3.3 14.8 Q3.4 15.8 4.4 15.8 L11.6 15.8 Q12.6 15.8 12.7 14.8 L13 3.6" fill="none" stroke="#f26464" stroke-width="1.2" stroke-linejoin="round"/><line x1="2" y1="3.4" x2="14" y2="3.4" stroke="#f26464" stroke-width="1.3" stroke-linecap="round"/><path d="M6 3 L6 2.2 L10 2.2 L10 3" fill="none" stroke="#f26464" stroke-width="1.1"/><line x1="6.4" y1="6.2" x2="6.4" y2="12.8" stroke="#f26464" stroke-width="1.1"/><line x1="9.6" y1="6.2" x2="9.6" y2="12.8" stroke="#f26464" stroke-width="1.1"/></svg>
<div class="abs" style="left:308px;top:411px;width:1588px;height:1px;background:#e3e6ea"></div>
<div class="t" style="left:316px;top:429.4px;font-size:14px;color:#2f4aa8">Buzón de sugerencias - anónima</div>
<div class="t" style="left:966.5px;top:429.4px;font-size:14px;color:#222326;letter-spacing:.35px;">17/02/2026</div>
<div class="t" style="left:1363px;top:429.4px;font-size:14px;color:#222326;letter-spacing:.35px;">25</div>
<div class="abs" style="left:1486px;top:425px;width:65px;height:24px;background:#dbe3f8;border-radius:9px"></div>
<div class="t" style="left:1496px;top:430.9px;font-size:11.6px;color:#3a55a8">En curso</div>
<div class="t" style="left:1660.5px;top:429.4px;font-size:14px;color:#222326;letter-spacing:.35px;">0%</div>
<svg class="abs" style="left:1795px;top:429px" width="16" height="16" viewBox="0 0 16 16"><rect x="1.4" y="1.6" width="13.2" height="13.2" rx="1" fill="none" stroke="#3048a8" stroke-width="1.2"/><rect x="1.4" y="1.6" width="13.2" height="2.6" fill="#3048a8"/><ellipse cx="8" cy="9.4" rx="3.9" ry="2.4" fill="none" stroke="#3048a8" stroke-width="1.1"/><circle cx="8" cy="9.4" r="1" fill="#3048a8"/></svg>
<svg class="abs" style="left:1829.5px;top:430px" width="16" height="14" viewBox="0 0 16 14"><path d="M1.6 7.9 L5.6 11.5 L13.4 4" fill="none" stroke="#3048a8" stroke-width="1.35" stroke-linecap="round" stroke-linejoin="miter"/></svg>
<svg class="abs" style="left:1863px;top:428px" width="16" height="17" viewBox="0 0 16 17"><path d="M3 3.6 L3.3 14.8 Q3.4 15.8 4.4 15.8 L11.6 15.8 Q12.6 15.8 12.7 14.8 L13 3.6" fill="none" stroke="#f26464" stroke-width="1.2" stroke-linejoin="round"/><line x1="2" y1="3.4" x2="14" y2="3.4" stroke="#f26464" stroke-width="1.3" stroke-linecap="round"/><path d="M6 3 L6 2.2 L10 2.2 L10 3" fill="none" stroke="#f26464" stroke-width="1.1"/><line x1="6.4" y1="6.2" x2="6.4" y2="12.8" stroke="#f26464" stroke-width="1.1"/><line x1="9.6" y1="6.2" x2="9.6" y2="12.8" stroke="#f26464" stroke-width="1.1"/></svg>
<div class="abs" style="left:308px;top:462px;width:1588px;height:1px;background:#e3e6ea"></div>
<div class="t" style="left:316px;top:480.4px;font-size:14px;color:#2f4aa8">Encuesta Libre Adjuntar Archivo Prueba</div>
<div class="t" style="left:966.5px;top:480.4px;font-size:14px;color:#222326;letter-spacing:.35px;">10/02/2026</div>
<div class="t" style="left:1363px;top:480.4px;font-size:14px;color:#222326;letter-spacing:.35px;">1</div>
<div class="abs" style="left:1486px;top:476px;width:65px;height:24px;background:#dbe3f8;border-radius:9px"></div>
<div class="t" style="left:1496px;top:481.9px;font-size:11.6px;color:#3a55a8">En curso</div>
<div class="t" style="left:1660.5px;top:480.4px;font-size:14px;color:#222326;letter-spacing:.35px;">100%</div>
<svg class="abs" style="left:1795px;top:480px" width="16" height="16" viewBox="0 0 16 16"><rect x="1.4" y="1.6" width="13.2" height="13.2" rx="1" fill="none" stroke="#3048a8" stroke-width="1.2"/><rect x="1.4" y="1.6" width="13.2" height="2.6" fill="#3048a8"/><ellipse cx="8" cy="9.4" rx="3.9" ry="2.4" fill="none" stroke="#3048a8" stroke-width="1.1"/><circle cx="8" cy="9.4" r="1" fill="#3048a8"/></svg>
<svg class="abs" style="left:1829.5px;top:481px" width="16" height="14" viewBox="0 0 16 14"><path d="M1.6 7.9 L5.6 11.5 L13.4 4" fill="none" stroke="#3048a8" stroke-width="1.35" stroke-linecap="round" stroke-linejoin="miter"/></svg>
<svg class="abs" style="left:1863px;top:479px" width="16" height="17" viewBox="0 0 16 17"><path d="M3 3.6 L3.3 14.8 Q3.4 15.8 4.4 15.8 L11.6 15.8 Q12.6 15.8 12.7 14.8 L13 3.6" fill="none" stroke="#f26464" stroke-width="1.2" stroke-linejoin="round"/><line x1="2" y1="3.4" x2="14" y2="3.4" stroke="#f26464" stroke-width="1.3" stroke-linecap="round"/><path d="M6 3 L6 2.2 L10 2.2 L10 3" fill="none" stroke="#f26464" stroke-width="1.1"/><line x1="6.4" y1="6.2" x2="6.4" y2="12.8" stroke="#f26464" stroke-width="1.1"/><line x1="9.6" y1="6.2" x2="9.6" y2="12.8" stroke="#f26464" stroke-width="1.1"/></svg>
<div class="abs" style="left:308px;top:513px;width:1588px;height:1px;background:#e3e6ea"></div>
<div class="t" style="left:316px;top:531.4px;font-size:14px;color:#2f4aa8">Encuesta Libre <span style="letter-spacing:.4px">10</span>-<span style="letter-spacing:.4px">02</span>-<span style="letter-spacing:.4px">2026</span> (<span style="letter-spacing:.4px">3</span>)</div>
<div class="t" style="left:966.5px;top:531.4px;font-size:14px;color:#222326;letter-spacing:.35px;">10/02/2026</div>
<div class="t" style="left:1363px;top:531.4px;font-size:14px;color:#222326;letter-spacing:.35px;">1</div>
<div class="abs" style="left:1486px;top:527px;width:65px;height:24px;background:#dbe3f8;border-radius:9px"></div>
<div class="t" style="left:1496px;top:532.9px;font-size:11.6px;color:#3a55a8">En curso</div>
<div class="t" style="left:1660.5px;top:531.4px;font-size:14px;color:#222326;letter-spacing:.35px;">100%</div>
<svg class="abs" style="left:1795px;top:531px" width="16" height="16" viewBox="0 0 16 16"><rect x="1.4" y="1.6" width="13.2" height="13.2" rx="1" fill="none" stroke="#3048a8" stroke-width="1.2"/><rect x="1.4" y="1.6" width="13.2" height="2.6" fill="#3048a8"/><ellipse cx="8" cy="9.4" rx="3.9" ry="2.4" fill="none" stroke="#3048a8" stroke-width="1.1"/><circle cx="8" cy="9.4" r="1" fill="#3048a8"/></svg>
<svg class="abs" style="left:1829.5px;top:532px" width="16" height="14" viewBox="0 0 16 14"><path d="M1.6 7.9 L5.6 11.5 L13.4 4" fill="none" stroke="#3048a8" stroke-width="1.35" stroke-linecap="round" stroke-linejoin="miter"/></svg>
<svg class="abs" style="left:1863px;top:530px" width="16" height="17" viewBox="0 0 16 17"><path d="M3 3.6 L3.3 14.8 Q3.4 15.8 4.4 15.8 L11.6 15.8 Q12.6 15.8 12.7 14.8 L13 3.6" fill="none" stroke="#f26464" stroke-width="1.2" stroke-linejoin="round"/><line x1="2" y1="3.4" x2="14" y2="3.4" stroke="#f26464" stroke-width="1.3" stroke-linecap="round"/><path d="M6 3 L6 2.2 L10 2.2 L10 3" fill="none" stroke="#f26464" stroke-width="1.1"/><line x1="6.4" y1="6.2" x2="6.4" y2="12.8" stroke="#f26464" stroke-width="1.1"/><line x1="9.6" y1="6.2" x2="9.6" y2="12.8" stroke="#f26464" stroke-width="1.1"/></svg>
<div class="abs" style="left:308px;top:564px;width:1588px;height:1px;background:#e3e6ea"></div>
<div class="t" style="left:316px;top:582.4px;font-size:14px;color:#2f4aa8">Encuesta Recurrente</div>
<div class="t" style="left:966.5px;top:582.4px;font-size:14px;color:#222326;letter-spacing:.35px;">06/02/2026</div>
<div class="t" style="left:1363px;top:582.4px;font-size:14px;color:#222326;letter-spacing:.35px;">1</div>
<div class="abs" style="left:1486px;top:578px;width:65px;height:24px;background:#dbe3f8;border-radius:9px"></div>
<div class="t" style="left:1496px;top:583.9px;font-size:11.6px;color:#3a55a8">En curso</div>
<div class="t" style="left:1660.5px;top:582.4px;font-size:14px;color:#222326;letter-spacing:.35px;">100%</div>
<svg class="abs" style="left:1795px;top:582px" width="16" height="16" viewBox="0 0 16 16"><rect x="1.4" y="1.6" width="13.2" height="13.2" rx="1" fill="none" stroke="#3048a8" stroke-width="1.2"/><rect x="1.4" y="1.6" width="13.2" height="2.6" fill="#3048a8"/><ellipse cx="8" cy="9.4" rx="3.9" ry="2.4" fill="none" stroke="#3048a8" stroke-width="1.1"/><circle cx="8" cy="9.4" r="1" fill="#3048a8"/></svg>
<svg class="abs" style="left:1829.5px;top:583px" width="16" height="14" viewBox="0 0 16 14"><path d="M1.6 7.9 L5.6 11.5 L13.4 4" fill="none" stroke="#3048a8" stroke-width="1.35" stroke-linecap="round" stroke-linejoin="miter"/></svg>
<svg class="abs" style="left:1863px;top:581px" width="16" height="17" viewBox="0 0 16 17"><path d="M3 3.6 L3.3 14.8 Q3.4 15.8 4.4 15.8 L11.6 15.8 Q12.6 15.8 12.7 14.8 L13 3.6" fill="none" stroke="#f26464" stroke-width="1.2" stroke-linejoin="round"/><line x1="2" y1="3.4" x2="14" y2="3.4" stroke="#f26464" stroke-width="1.3" stroke-linecap="round"/><path d="M6 3 L6 2.2 L10 2.2 L10 3" fill="none" stroke="#f26464" stroke-width="1.1"/><line x1="6.4" y1="6.2" x2="6.4" y2="12.8" stroke="#f26464" stroke-width="1.1"/><line x1="9.6" y1="6.2" x2="9.6" y2="12.8" stroke="#f26464" stroke-width="1.1"/></svg>
<div class="abs" style="left:308px;top:615px;width:1588px;height:1px;background:#e3e6ea"></div>
<div class="t" style="left:316px;top:633.4px;font-size:14px;color:#2f4aa8">Encuesta Libre <span style="letter-spacing:.4px">05</span>-<span style="letter-spacing:.4px">02</span>-<span style="letter-spacing:.4px">2026</span></div>
<div class="t" style="left:966.5px;top:633.4px;font-size:14px;color:#222326;letter-spacing:.35px;">05/02/2026</div>
<div class="t" style="left:1363px;top:633.4px;font-size:14px;color:#222326;letter-spacing:.35px;">1</div>
<div class="abs" style="left:1486px;top:629px;width:65px;height:24px;background:#dbe3f8;border-radius:9px"></div>
<div class="t" style="left:1496px;top:634.9px;font-size:11.6px;color:#3a55a8">En curso</div>
<div class="t" style="left:1660.5px;top:633.4px;font-size:14px;color:#222326;letter-spacing:.35px;">100%</div>
<svg class="abs" style="left:1795px;top:633px" width="16" height="16" viewBox="0 0 16 16"><rect x="1.4" y="1.6" width="13.2" height="13.2" rx="1" fill="none" stroke="#3048a8" stroke-width="1.2"/><rect x="1.4" y="1.6" width="13.2" height="2.6" fill="#3048a8"/><ellipse cx="8" cy="9.4" rx="3.9" ry="2.4" fill="none" stroke="#3048a8" stroke-width="1.1"/><circle cx="8" cy="9.4" r="1" fill="#3048a8"/></svg>
<svg class="abs" style="left:1829.5px;top:634px" width="16" height="14" viewBox="0 0 16 14"><path d="M1.6 7.9 L5.6 11.5 L13.4 4" fill="none" stroke="#3048a8" stroke-width="1.35" stroke-linecap="round" stroke-linejoin="miter"/></svg>
<svg class="abs" style="left:1863px;top:632px" width="16" height="17" viewBox="0 0 16 17"><path d="M3 3.6 L3.3 14.8 Q3.4 15.8 4.4 15.8 L11.6 15.8 Q12.6 15.8 12.7 14.8 L13 3.6" fill="none" stroke="#f26464" stroke-width="1.2" stroke-linejoin="round"/><line x1="2" y1="3.4" x2="14" y2="3.4" stroke="#f26464" stroke-width="1.3" stroke-linecap="round"/><path d="M6 3 L6 2.2 L10 2.2 L10 3" fill="none" stroke="#f26464" stroke-width="1.1"/><line x1="6.4" y1="6.2" x2="6.4" y2="12.8" stroke="#f26464" stroke-width="1.1"/><line x1="9.6" y1="6.2" x2="9.6" y2="12.8" stroke="#f26464" stroke-width="1.1"/></svg>
<div class="abs" style="left:308px;top:666px;width:1588px;height:1px;background:#e3e6ea"></div>
<div class="t" style="left:316px;top:684.4px;font-size:14px;color:#2f4aa8">(Javo) Encuesta Prueba - Fecha y Archivos</div>
<div class="t" style="left:966.5px;top:684.4px;font-size:14px;color:#222326;letter-spacing:.35px;">27/01/2026</div>
<div class="t" style="left:1363px;top:684.4px;font-size:14px;color:#222326;letter-spacing:.35px;">1</div>
<div class="abs" style="left:1486px;top:680px;width:65px;height:24px;background:#dbe3f8;border-radius:9px"></div>
<div class="t" style="left:1496px;top:685.9px;font-size:11.6px;color:#3a55a8">En curso</div>
<div class="t" style="left:1660.5px;top:684.4px;font-size:14px;color:#222326;letter-spacing:.35px;">100%</div>
<svg class="abs" style="left:1795px;top:684px" width="16" height="16" viewBox="0 0 16 16"><rect x="1.4" y="1.6" width="13.2" height="13.2" rx="1" fill="none" stroke="#3048a8" stroke-width="1.2"/><rect x="1.4" y="1.6" width="13.2" height="2.6" fill="#3048a8"/><ellipse cx="8" cy="9.4" rx="3.9" ry="2.4" fill="none" stroke="#3048a8" stroke-width="1.1"/><circle cx="8" cy="9.4" r="1" fill="#3048a8"/></svg>
<svg class="abs" style="left:1829.5px;top:685px" width="16" height="14" viewBox="0 0 16 14"><path d="M1.6 7.9 L5.6 11.5 L13.4 4" fill="none" stroke="#3048a8" stroke-width="1.35" stroke-linecap="round" stroke-linejoin="miter"/></svg>
<svg class="abs" style="left:1863px;top:683px" width="16" height="17" viewBox="0 0 16 17"><path d="M3 3.6 L3.3 14.8 Q3.4 15.8 4.4 15.8 L11.6 15.8 Q12.6 15.8 12.7 14.8 L13 3.6" fill="none" stroke="#f26464" stroke-width="1.2" stroke-linejoin="round"/><line x1="2" y1="3.4" x2="14" y2="3.4" stroke="#f26464" stroke-width="1.3" stroke-linecap="round"/><path d="M6 3 L6 2.2 L10 2.2 L10 3" fill="none" stroke="#f26464" stroke-width="1.1"/><line x1="6.4" y1="6.2" x2="6.4" y2="12.8" stroke="#f26464" stroke-width="1.1"/><line x1="9.6" y1="6.2" x2="9.6" y2="12.8" stroke="#f26464" stroke-width="1.1"/></svg>
<div class="abs" style="left:308px;top:717px;width:1588px;height:1px;background:#e3e6ea"></div>
<div class="t" style="left:316px;top:735.4px;font-size:14px;color:#2f4aa8">Nuevos tipos de pregunta - Fecha y archivo</div>
<div class="t" style="left:966.5px;top:735.4px;font-size:14px;color:#222326;letter-spacing:.35px;">27/01/2026</div>
<div class="t" style="left:1363px;top:735.4px;font-size:14px;color:#222326;letter-spacing:.35px;">25</div>
<div class="abs" style="left:1486px;top:731px;width:65px;height:24px;background:#dbe3f8;border-radius:9px"></div>
<div class="t" style="left:1496px;top:736.9px;font-size:11.6px;color:#3a55a8">En curso</div>
<div class="t" style="left:1660.5px;top:735.4px;font-size:14px;color:#222326;letter-spacing:.35px;">4%</div>
<svg class="abs" style="left:1795px;top:735px" width="16" height="16" viewBox="0 0 16 16"><rect x="1.4" y="1.6" width="13.2" height="13.2" rx="1" fill="none" stroke="#3048a8" stroke-width="1.2"/><rect x="1.4" y="1.6" width="13.2" height="2.6" fill="#3048a8"/><ellipse cx="8" cy="9.4" rx="3.9" ry="2.4" fill="none" stroke="#3048a8" stroke-width="1.1"/><circle cx="8" cy="9.4" r="1" fill="#3048a8"/></svg>
<svg class="abs" style="left:1829.5px;top:736px" width="16" height="14" viewBox="0 0 16 14"><path d="M1.6 7.9 L5.6 11.5 L13.4 4" fill="none" stroke="#3048a8" stroke-width="1.35" stroke-linecap="round" stroke-linejoin="miter"/></svg>
<svg class="abs" style="left:1863px;top:734px" width="16" height="17" viewBox="0 0 16 17"><path d="M3 3.6 L3.3 14.8 Q3.4 15.8 4.4 15.8 L11.6 15.8 Q12.6 15.8 12.7 14.8 L13 3.6" fill="none" stroke="#f26464" stroke-width="1.2" stroke-linejoin="round"/><line x1="2" y1="3.4" x2="14" y2="3.4" stroke="#f26464" stroke-width="1.3" stroke-linecap="round"/><path d="M6 3 L6 2.2 L10 2.2 L10 3" fill="none" stroke="#f26464" stroke-width="1.1"/><line x1="6.4" y1="6.2" x2="6.4" y2="12.8" stroke="#f26464" stroke-width="1.1"/><line x1="9.6" y1="6.2" x2="9.6" y2="12.8" stroke="#f26464" stroke-width="1.1"/></svg>
<div class="abs" style="left:308px;top:768px;width:1588px;height:1px;background:#e3e6ea"></div>
<div class="t" style="left:316px;top:786.4px;font-size:14px;color:#2f4aa8">Encuesta Libre <span style="letter-spacing:.4px">12</span>-<span style="letter-spacing:.4px">12</span>-<span style="letter-spacing:.4px">2025</span></div>
<div class="t" style="left:966.5px;top:786.4px;font-size:14px;color:#222326;letter-spacing:.35px;">12/12/2025</div>
<div class="t" style="left:1363px;top:786.4px;font-size:14px;color:#222326;letter-spacing:.35px;">2</div>
<div class="abs" style="left:1486px;top:782px;width:65px;height:24px;background:#dbe3f8;border-radius:9px"></div>
<div class="t" style="left:1496px;top:787.9px;font-size:11.6px;color:#3a55a8">En curso</div>
<div class="t" style="left:1660.5px;top:786.4px;font-size:14px;color:#222326;letter-spacing:.35px;">100%</div>
<svg class="abs" style="left:1795px;top:786px" width="16" height="16" viewBox="0 0 16 16"><rect x="1.4" y="1.6" width="13.2" height="13.2" rx="1" fill="none" stroke="#3048a8" stroke-width="1.2"/><rect x="1.4" y="1.6" width="13.2" height="2.6" fill="#3048a8"/><ellipse cx="8" cy="9.4" rx="3.9" ry="2.4" fill="none" stroke="#3048a8" stroke-width="1.1"/><circle cx="8" cy="9.4" r="1" fill="#3048a8"/></svg>
<svg class="abs" style="left:1829.5px;top:787px" width="16" height="14" viewBox="0 0 16 14"><path d="M1.6 7.9 L5.6 11.5 L13.4 4" fill="none" stroke="#3048a8" stroke-width="1.35" stroke-linecap="round" stroke-linejoin="miter"/></svg>
<svg class="abs" style="left:1863px;top:785px" width="16" height="17" viewBox="0 0 16 17"><path d="M3 3.6 L3.3 14.8 Q3.4 15.8 4.4 15.8 L11.6 15.8 Q12.6 15.8 12.7 14.8 L13 3.6" fill="none" stroke="#f26464" stroke-width="1.2" stroke-linejoin="round"/><line x1="2" y1="3.4" x2="14" y2="3.4" stroke="#f26464" stroke-width="1.3" stroke-linecap="round"/><path d="M6 3 L6 2.2 L10 2.2 L10 3" fill="none" stroke="#f26464" stroke-width="1.1"/><line x1="6.4" y1="6.2" x2="6.4" y2="12.8" stroke="#f26464" stroke-width="1.1"/><line x1="9.6" y1="6.2" x2="9.6" y2="12.8" stroke="#f26464" stroke-width="1.1"/></svg>
<div class="abs" style="left:308px;top:819px;width:1588px;height:1px;background:#e3e6ea"></div>
<div class="t" style="left:316px;top:837.4px;font-size:14px;color:#2f4aa8">Encuesta Comunicación<span style="letter-spacing:.4px">2</span></div>
<div class="t" style="left:966.5px;top:837.4px;font-size:14px;color:#222326;letter-spacing:.35px;">12/12/2025</div>
<div class="t" style="left:1363px;top:837.4px;font-size:14px;color:#222326;letter-spacing:.35px;">2</div>
<div class="abs" style="left:1486px;top:833px;width:65px;height:24px;background:#dbe3f8;border-radius:9px"></div>
<div class="t" style="left:1496px;top:838.9px;font-size:11.6px;color:#3a55a8">En curso</div>
<div class="t" style="left:1660.5px;top:837.4px;font-size:14px;color:#222326;letter-spacing:.35px;">50%</div>
<svg class="abs" style="left:1795px;top:837px" width="16" height="16" viewBox="0 0 16 16"><rect x="1.4" y="1.6" width="13.2" height="13.2" rx="1" fill="none" stroke="#3048a8" stroke-width="1.2"/><rect x="1.4" y="1.6" width="13.2" height="2.6" fill="#3048a8"/><ellipse cx="8" cy="9.4" rx="3.9" ry="2.4" fill="none" stroke="#3048a8" stroke-width="1.1"/><circle cx="8" cy="9.4" r="1" fill="#3048a8"/></svg>
<svg class="abs" style="left:1829.5px;top:838px" width="16" height="14" viewBox="0 0 16 14"><path d="M1.6 7.9 L5.6 11.5 L13.4 4" fill="none" stroke="#3048a8" stroke-width="1.35" stroke-linecap="round" stroke-linejoin="miter"/></svg>
<svg class="abs" style="left:1863px;top:836px" width="16" height="17" viewBox="0 0 16 17"><path d="M3 3.6 L3.3 14.8 Q3.4 15.8 4.4 15.8 L11.6 15.8 Q12.6 15.8 12.7 14.8 L13 3.6" fill="none" stroke="#f26464" stroke-width="1.2" stroke-linejoin="round"/><line x1="2" y1="3.4" x2="14" y2="3.4" stroke="#f26464" stroke-width="1.3" stroke-linecap="round"/><path d="M6 3 L6 2.2 L10 2.2 L10 3" fill="none" stroke="#f26464" stroke-width="1.1"/><line x1="6.4" y1="6.2" x2="6.4" y2="12.8" stroke="#f26464" stroke-width="1.1"/><line x1="9.6" y1="6.2" x2="9.6" y2="12.8" stroke="#f26464" stroke-width="1.1"/></svg>
<div class="abs" style="left:308px;top:870px;width:1588px;height:1px;background:#e3e6ea"></div>
<div class="t" style="left:316px;top:888.4px;font-size:14px;color:#2f4aa8">Comunicación</div>
<div class="t" style="left:966.5px;top:888.4px;font-size:14px;color:#222326;letter-spacing:.35px;">05/12/2025</div>
<div class="t" style="left:1363px;top:888.4px;font-size:14px;color:#222326;letter-spacing:.35px;">1</div>
<div class="abs" style="left:1486px;top:884px;width:65px;height:24px;background:#dbe3f8;border-radius:9px"></div>
<div class="t" style="left:1496px;top:889.9px;font-size:11.6px;color:#3a55a8">En curso</div>
<div class="t" style="left:1660.5px;top:888.4px;font-size:14px;color:#222326;letter-spacing:.35px;">100%</div>
<svg class="abs" style="left:1795px;top:888px" width="16" height="16" viewBox="0 0 16 16"><rect x="1.4" y="1.6" width="13.2" height="13.2" rx="1" fill="none" stroke="#3048a8" stroke-width="1.2"/><rect x="1.4" y="1.6" width="13.2" height="2.6" fill="#3048a8"/><ellipse cx="8" cy="9.4" rx="3.9" ry="2.4" fill="none" stroke="#3048a8" stroke-width="1.1"/><circle cx="8" cy="9.4" r="1" fill="#3048a8"/></svg>
<svg class="abs" style="left:1829.5px;top:889px" width="16" height="14" viewBox="0 0 16 14"><path d="M1.6 7.9 L5.6 11.5 L13.4 4" fill="none" stroke="#3048a8" stroke-width="1.35" stroke-linecap="round" stroke-linejoin="miter"/></svg>
<svg class="abs" style="left:1863px;top:887px" width="16" height="17" viewBox="0 0 16 17"><path d="M3 3.6 L3.3 14.8 Q3.4 15.8 4.4 15.8 L11.6 15.8 Q12.6 15.8 12.7 14.8 L13 3.6" fill="none" stroke="#f26464" stroke-width="1.2" stroke-linejoin="round"/><line x1="2" y1="3.4" x2="14" y2="3.4" stroke="#f26464" stroke-width="1.3" stroke-linecap="round"/><path d="M6 3 L6 2.2 L10 2.2 L10 3" fill="none" stroke="#f26464" stroke-width="1.1"/><line x1="6.4" y1="6.2" x2="6.4" y2="12.8" stroke="#f26464" stroke-width="1.1"/><line x1="9.6" y1="6.2" x2="9.6" y2="12.8" stroke="#f26464" stroke-width="1.1"/></svg>
<div class="abs" style="left:308px;top:921px;width:1588px;height:1px;background:#e3e6ea"></div>
<div class="abs" style="left:1853px;top:844px;width:50px;height:50px;border-radius:50%;background:#2f4ba8;box-shadow:0 1px 4px rgba(0,0,0,.25)"></div>
<svg class="abs" style="left:1866px;top:861px" width="24" height="20" viewBox="0 0 24 20"><rect x="1.9" y="1.8" width="20" height="10.2" rx="5.1" fill="#fff"/><path d="M14 14.1 L18.3 14.1 L18 18Z" fill="#fff"/></svg>
<svg class="abs" style="left:977px;top:198px" width="22" height="32" viewBox="0 0 22 32"><path d="M3 3 L3 23.5 L7.6 18.8 L12.3 29.4 L15.8 27.9 L11.6 17.8 L19 17.8 Z" fill="#000" stroke="#fff" stroke-width="1.2" stroke-linejoin="miter"/></svg>
<!--ENDMAIN-->
<div id="sb"></div><div id="sbt"></div>
</body></html>
